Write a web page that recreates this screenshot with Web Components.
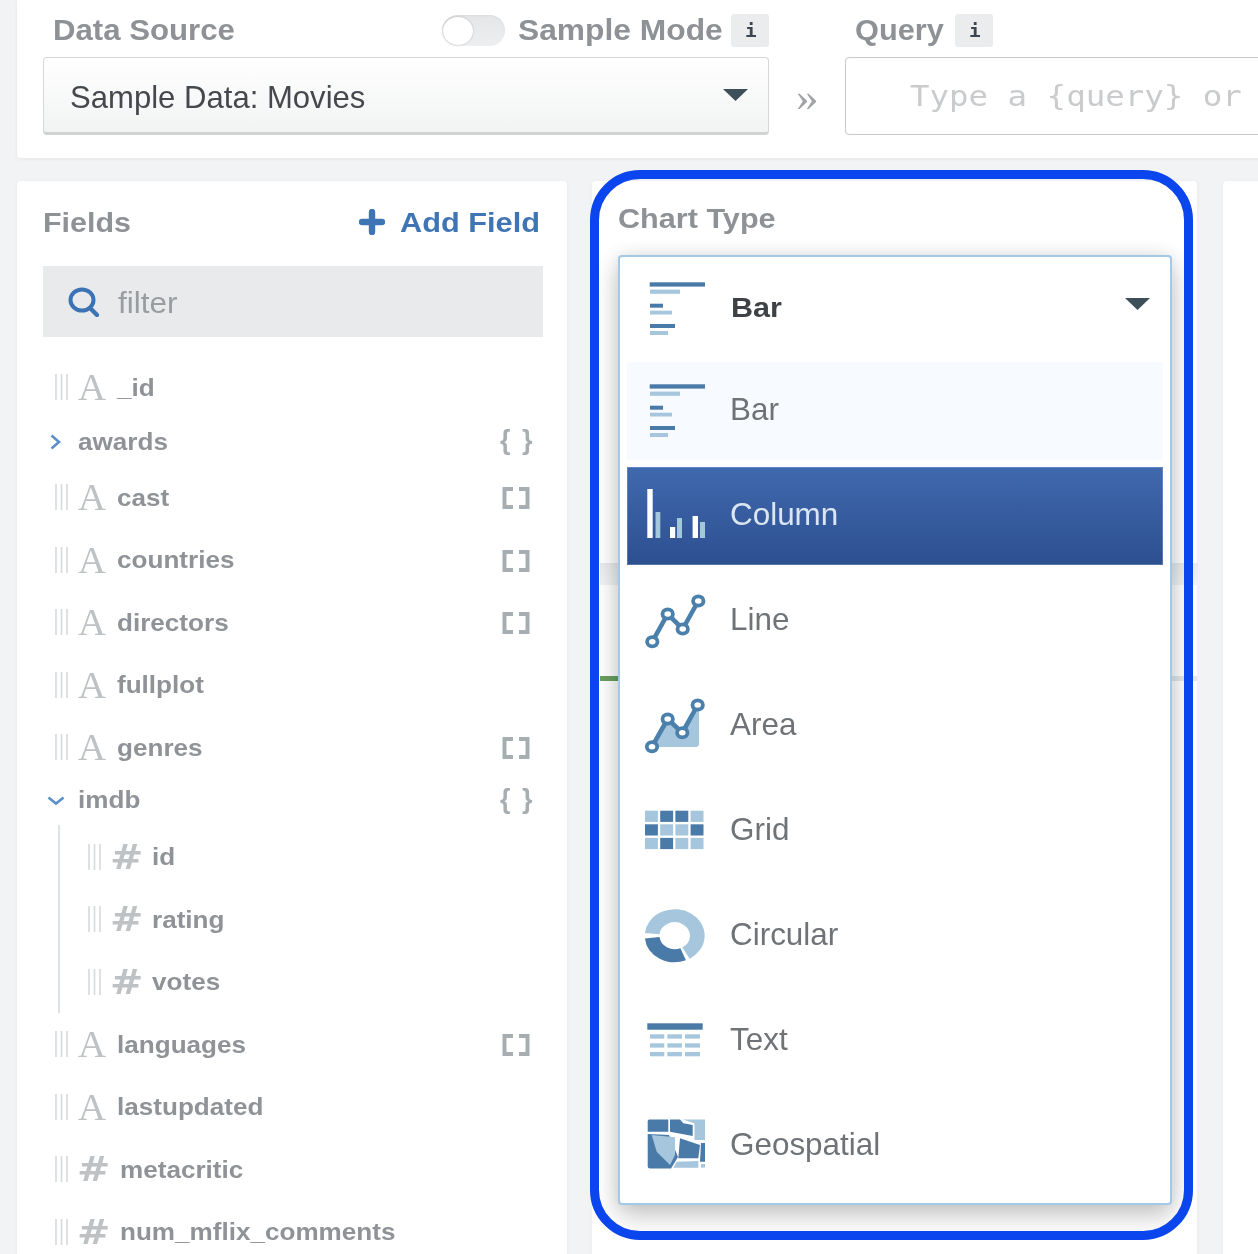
<!DOCTYPE html>
<html lang="en">
<head>
<meta charset="utf-8">
<title>Chart Builder</title>
<style>
html,body{margin:0;padding:0;height:1254px;overflow:hidden;background:#f2f3f5}
</style>
</head>
<body>
<chart-app></chart-app>
<script>
const DARK='#4a7aa8',LIGHT='#a5c6dc';
function def(name,html){
  const cls=class extends HTMLElement{
    constructor(){super();this.attachShadow({mode:'open'});}
    connectedCallback(){this.shadowRoot.innerHTML=typeof html==='function'?html(this):html;}
  };
  customElements.define(name,cls);
}
/* The reference is stretched sideways: text is scaled to match */
def('x-t',`<style>:host{display:inline-block;white-space:nowrap;transform:scaleX(var(--sx,1.13));transform-origin:0 50%}</style><slot></slot>`);

const r=(x,y,w,h,f)=>`<rect x="${x}" y="${y}" width="${w}" height="${h}" fill="${f}"/>`;
const pts=[[7.3,69.7],[22.7,42],[37.7,57],[53.3,29]];
const lineMarks=(p)=>`<polyline points="${p.map(a=>a.join(',')).join(' ')}" fill="none" stroke="#4a80ab" stroke-width="4.6"/>`+
  p.map(a=>`<ellipse cx="${a[0]}" cy="${a[1]}" rx="5.2" ry="4.6" fill="#fff" stroke="#4a80ab" stroke-width="3.8"/>`).join('');
const gridPat=['LDDL','DLLD','LDLL'];
const ICONS={
 bar:r(4.7,22.3,55.3,4.3,DARK)+r(5,29.6,30,4.2,LIGHT)+r(5,43.7,13,4,DARK)+r(5,50.7,22,3.8,LIGHT)+r(5,64,25,4,DARK)+r(5,71,18,4,LIGHT),
 column:r(2.3,22,5.4,49,'#fff')+r(10.5,45,4.8,26,'#a3c8dc')+r(25,60,5.2,11,'#fff')+r(32,51,5,20,'#a3c8dc')+r(47.6,49,5.4,22,'#fff')+r(55,55,5,16,'#a3c8dc'),
 line:lineMarks(pts),
 area:`<polygon points="7,70 22.7,42 37.3,55.7 52.7,28 54,28 54,68 52,70" fill="${LIGHT}"/>`+lineMarks([[7,69.7],[22.7,42],[37.3,55.7],[52.7,28]]),
 grid:gridPat.map((row,j)=>[...row].map((c,i)=>r(i*15.2,28.7+j*13.6,12.9,11.2,c==='D'?DARK:LIGHT)).join('')).join(''),
 circular:`<g transform="translate(29.7,48.7) scale(1.13,1)" fill="none" stroke-width="13">
   <path d="M-19.89 -2.09A20 20 0 1 1 10 17.32" stroke="${LIGHT}"/>
   <path d="M7.49 18.54A20 20 0 0 1 -19.89 2.09" stroke="${DARK}"/></g>`,
 text:r(2.3,31.3,55.4,6.4,DARK)+[42.3,51.3,60].map(y=>r(5,y,14.3,4.3,LIGHT)+r(22.3,y,14.7,4.3,LIGHT)+r(40,y,15,4.3,LIGHT)).join(''),
 geo:`<path d="M2.7 24a1.5 1.5 0 0 1 1.5-1.5H23.3V34.7L2.7 34.7Z" fill="${DARK}"/>
   <polygon points="25,22.5 35,22.5 38.3,26.3 47.7,28 47.7,39 25,34.7" fill="${DARK}"/>
   <polygon points="38,22.5 60,22.5 60,43 49.5,43 49.5,26.5" fill="${LIGHT}"/>
   <path d="M2.7 37L24 38 33 60 26 71.5H5a2.3 2.3 0 0 1-2.3-2.3Z" fill="${DARK}"/>
   <polygon points="6.7,38 30,40.3 30,58 25,68 11.7,54.7" fill="${LIGHT}"/>
   <polygon points="35,41.3 55,48 53.3,61.3 33.3,61.3" fill="${DARK}"/>
   <polygon points="31.7,64.7 53.3,64 53.3,70.8 28.3,70.8" fill="${LIGHT}"/>
   <polygon points="56,46 60,46 60,64.7 55,64.7" fill="${DARK}"/>
   <rect x="56" y="67" width="4" height="3.6" fill="${LIGHT}"/>`
};
def('chart-icon',h=>`<style>:host{display:block;width:62px;height:98px;flex:none}svg{display:block;overflow:visible}</style>
 <svg width="62" height="98" viewBox="0 0 62 98" aria-hidden="true">${ICONS[h.getAttribute('type')]}</svg>`);

def('chart-option',h=>{
 const sel=h.hasAttribute('selected'),cur=h.hasAttribute('current');
 return `<style>
 :host{display:flex;align-items:center;height:98px;padding-left:18px;gap:23px;margin-bottom:7px;
  font:400 30.5px "Liberation Sans",sans-serif;color:#6f7377;--sx:1.03;
  background:${sel?'linear-gradient(#4069ae,#2d4f90)':cur?'#f7faff':'transparent'};
  ${sel?'color:#dbe6f3;box-shadow:inset 0 0 0 1px rgba(160,185,225,.35);':''}}
 x-t{margin-bottom:2px}
 </style><chart-icon type="${h.getAttribute('icon')}"></chart-icon><x-t>${h.getAttribute('label')}</x-t>`;
});

def('chart-dropdown',`<style>
 :host{display:block;background:#fff;border:2px solid #a3c9e9;border-radius:4px;height:950px;box-sizing:border-box;
  box-shadow:0 12px 26px rgba(0,0,0,.2),0 0 18px rgba(0,0,0,.1);flex:none}
 .head{display:flex;align-items:center;height:105px;padding:0 20px 0 25px;font:700 27px "Liberation Sans",sans-serif;color:#3e4246}
 .head x-t{margin:0 0 2px 24px}
 .head svg{margin-left:auto;margin-bottom:10px}
 .list{padding:0 7px}
 </style>
 <div class="head"><chart-icon type="bar"></chart-icon><x-t>Bar</x-t>
  <svg width="25" height="12" viewBox="0 0 25 12"><path d="M0 0H25L12.5 12Z" fill="#3d4f58"/></svg></div>
 <div class="list">
  <chart-option icon="bar" label="Bar" current></chart-option>
  <chart-option icon="column" label="Column" selected></chart-option>
  <chart-option icon="line" label="Line"></chart-option>
  <chart-option icon="area" label="Area"></chart-option>
  <chart-option icon="grid" label="Grid"></chart-option>
  <chart-option icon="circular" label="Circular"></chart-option>
  <chart-option icon="text" label="Text"></chart-option>
  <chart-option icon="geo" label="Geospatial"></chart-option>
 </div>`);

def('chart-panel',`<style>
 :host{display:block;position:relative;flex:none;width:605px;height:1200px;margin-left:25px;background:#fff;border-radius:4px;box-shadow:0 0 4px rgba(0,0,0,.04);box-sizing:border-box;padding-top:382px}
 .band{height:22px;margin-left:8px;margin-right:-1px;background:linear-gradient(#e9eaec,#f2f3f4)}
 .rule{display:flex;height:5px;margin:91px 0 0 8px}
 .rule i{display:block;height:5px}
 .ring{position:absolute;left:-2px;top:-11px;width:602.5px;height:1070px;box-sizing:border-box;border:9.5px solid #0a45ee;border-radius:50px;overflow:hidden;display:flex;flex-direction:column;padding:0 11.5px 0 18.5px}
 .title{height:75.5px;padding-top:13px;box-sizing:border-box;font:700 28.5px/52px "Liberation Sans",sans-serif;color:#8e9195;flex:none;--sx:1.074}
 .title x-t{display:block;line-height:53px}
 </style>
 <div class="band"></div>
 <div class="rule"><i style="width:100px;background:#6a9f5f"></i><i style="flex:1;background:#e6e7e8"></i></div>
 <div class="ring">
  <div class="title"><x-t>Chart Type</x-t></div>
  <chart-dropdown></chart-dropdown>
 </div>`);

const grip=`<svg class="grip" width="13" height="26" viewBox="0 0 13 26"><path d="M1 0V26M6.5 0V26M12 0V26" stroke="#d6d9db" stroke-width="1.6"/></svg>`;
const SUFFIX={
 array:`<svg class="suf" style="margin-right:37px;margin-top:2px" width="28" height="22" viewBox="0 0 28 22"><path d="M11 2H2.5V20H11M17 2H25.5V20H17" fill="none" stroke="#a7aeb1" stroke-width="4"/></svg>`,
 object:`<x-t class="br">{ }</x-t>`
};
const rowCss=`
 :host{display:flex;align-items:center;font:700 24px "Liberation Sans",sans-serif;color:#8f9296;box-sizing:border-box;position:relative;--sx:1.087}
 .grip{flex:none}
 .k{flex:none;color:#bfc2c4}
 .k.A{font:400 38px/1 "Liberation Serif",serif;width:38px;--sx:1.02;margin-left:10px;margin-right:1px}
 .k.N{font:700 34px/1 "DejaVu Sans",sans-serif;width:43px;--sx:1.17;margin-left:9px}
 .suf{margin-left:auto;flex:none}
 .br{margin-left:auto;width:67px;flex:none;font:700 27px "Liberation Sans",sans-serif;letter-spacing:2px;color:#a7aeb1;--sx:1;margin-bottom:3px}
 x-t.n{margin-top:1px}
`;
def('field-row',h=>{
 const nested=h.hasAttribute('nested');
 const kind=h.getAttribute('kind')||'A';
 const s=h.getAttribute('suffix');
 return `<style>${rowCss}:host{height:62.5px;padding-left:${nested?71:38}px}${nested?'.k.N{width:42px}':''}</style>
 ${grip}<x-t class="k ${kind==='#'?'N':'A'}">${kind}</x-t><x-t class="n">${h.getAttribute('name')}</x-t>${s?SUFFIX[s]:''}`;
});
def('field-parent',h=>{
 const open=h.hasAttribute('open');
 const s=open?`<svg width="18" height="10" viewBox="0 0 18 10" style="margin-left:0"><path d="M1.5 1.5L9 7.5L16.5 1.5" fill="none" stroke="#5a8fc8" stroke-width="2.6"/></svg>`
  :`<svg width="11" height="16" viewBox="0 0 11 16" style="margin-left:3px"><path d="M1.5 1.5L9 8L1.5 14.5" fill="none" stroke="#5a8fc8" stroke-width="2.6"/></svg>`;
 return `<style>${rowCss}:host{height:${h.getAttribute('h')||45}px;padding-left:30px}.c{width:31px;flex:none;display:flex;align-items:center}x-t.n{margin-top:0;margin-bottom:1px}</style>
 <span class="c">${s}</span><x-t class="n">${h.getAttribute('name')}</x-t>${SUFFIX.object}`;
});
def('nested-fields',`<style>:host{display:block;margin-top:2px;position:relative}
 .l{position:absolute;left:41px;top:0;bottom:0;width:2px;background:#dfe2e4}</style><div class="l"></div><slot></slot>`);

def('fields-panel',`<style>
 :host{display:block;flex:none;width:550px;height:1200px;background:#fff;border-radius:4px;box-shadow:0 0 4px rgba(0,0,0,.04);box-sizing:border-box;overflow:hidden}
 .head{display:flex;align-items:center;height:82px;margin-bottom:3px;padding:0 0 0 26px}
 .title{font:700 28.5px "Liberation Sans",sans-serif;color:#8e9195;--sx:1.067}
 .add{margin-left:auto;width:208px;display:flex;align-items:center;gap:15px;font:700 28.5px "Liberation Sans",sans-serif;color:#3f74b5;--sx:1.078}
 .add x-t{margin-top:1px}
 .search{display:flex;align-items:center;height:71px;margin:0 24px 18.75px 26px;background:#e9eaec;padding-left:25px;gap:19px;font:400 30px "Liberation Sans",sans-serif;color:#9a9da0;--sx:1.05}
 .search x-t{margin-top:3px}
 </style>
 <div class="head"><x-t class="title">Fields</x-t>
  <div class="add"><svg width="26" height="26" viewBox="0 0 26 26"><path d="M13 3V23M3 13H23" stroke="#3f74b5" stroke-width="6.4" stroke-linecap="round" fill="none" /></svg><x-t>Add Field</x-t></div></div>
 <div class="search"><svg width="31" height="30" viewBox="0 0 31 30"><ellipse cx="14" cy="13" rx="11.5" ry="10.5" fill="none" stroke="#3d72b5" stroke-width="4"/><path d="M22 21L29 28" stroke="#3d72b5" stroke-width="4.4" stroke-linecap="round"/></svg><x-t>filter</x-t></div>
 <field-row name="_id"></field-row>
 <field-parent name="awards" h="47.5"></field-parent>
 <field-row name="cast" suffix="array"></field-row>
 <field-row name="countries" suffix="array"></field-row>
 <field-row name="directors" suffix="array"></field-row>
 <field-row name="fullplot"></field-row>
 <field-row name="genres" suffix="array"></field-row>
 <field-parent name="imdb" open></field-parent>
 <nested-fields>
  <field-row nested kind="#" name="id"></field-row>
  <field-row nested kind="#" name="rating"></field-row>
  <field-row nested kind="#" name="votes"></field-row>
 </nested-fields>
 <field-row name="languages" suffix="array"></field-row>
 <field-row name="lastupdated"></field-row>
 <field-row kind="#" name="metacritic"></field-row>
 <field-row kind="#" name="num_mflix_comments"></field-row>`);

def('info-badge',`<style>:host{display:flex;align-items:center;justify-content:center;width:38px;height:33px;background:#ebeced;border-radius:3px;font:700 18px "DejaVu Sans Mono",monospace;color:#3d4650;flex:none}</style><x-t>i</x-t>`);
def('toggle-switch',`<style>:host{display:block;position:relative;flex:none;width:63px;height:31px;border-radius:16px;background:linear-gradient(#e4e6e8,#eceef0);box-shadow:inset 0 1px 2px rgba(0,0,0,.05)}
 i{position:absolute;left:1px;top:2px;width:30px;height:28px;border-radius:50%;background:#fff;box-shadow:0 0 2px rgba(0,0,0,.25)}</style><i></i>`);

def('top-bar',`<style>
 :host{display:flex;height:158px;width:1300px;margin-left:17px;background:#fff;border-radius:0 0 4px 4px;box-shadow:0 1px 4px rgba(0,0,0,.06);box-sizing:border-box;padding-left:26px;font:700 29px "Liberation Sans",sans-serif;color:#8e9195;--sx:1.075}
 .src{width:726px;flex:none}
 .labels{display:flex;align-items:center;height:57px;padding-top:4px;box-sizing:border-box}
 .labels .first{margin-left:10px}
 .right{margin-left:auto;display:flex;align-items:center;gap:13px}
 .tx{display:block;flex:none}
 .select{display:flex;align-items:center;height:78px;box-sizing:border-box;border:1.5px solid #d6d7d8;border-bottom:3px solid #d0d2d3;border-radius:4px;background:linear-gradient(#fff,#f2f3f3);padding:0 20px 0 26px;font:400 30.5px "Liberation Sans",sans-serif;color:#45494d;--sx:1.019}
 .select x-t{margin-top:4px}
 .select svg{margin-left:auto}
 .go{width:76px;flex:none;height:78px;margin-top:57px;display:flex;align-items:center;padding-left:27px;box-sizing:border-box;font:400 40px "Liberation Serif",serif;color:#a0a4a7;--sx:1.13}
 .qry{flex:none;width:500px}
 .input{height:78px;box-sizing:border-box;border:1.8px solid #c6c8ca;border-radius:4px;display:flex;align-items:center;padding-left:64px;font:400 28.7px "DejaVu Sans Mono",monospace;color:#c9cbcd;background:#fff;--sx:1.13}
 </style>
 <div class="src">
  <div class="labels"><x-t class="first">Data Source</x-t>
   <div class="right"><toggle-switch></toggle-switch><span class="tx" style="width:200px;--sx:1.095"><x-t>Sample Mode</x-t></span><info-badge></info-badge></div></div>
  <div class="select"><x-t>Sample Data: Movies</x-t><svg width="25" height="12" viewBox="0 0 25 12"><path d="M0 0H25L12.5 12Z" fill="#3d4f58"/></svg></div>
 </div>
 <div class="go"><x-t>»</x-t></div>
 <div class="qry">
  <div class="labels" style="padding-left:10px;gap:11px"><span class="tx" style="width:89px;--sx:1.06"><x-t>Query</x-t></span><info-badge></info-badge></div>
  <div class="input"><x-t>Type a {query} or</x-t></div>
 </div>`);

def('chart-app',`<style>
 :host{display:block;width:1258px;height:1254px;overflow:hidden;background:#f2f3f5;filter:blur(.7px)}
 .main{display:flex;margin:23px 0 0 17px;width:1400px}
 .third{display:block;flex:none;width:200px;height:1200px;margin-left:26px;background:#fff;border-radius:4px;box-shadow:0 0 4px rgba(0,0,0,.04)}
 </style>
 <top-bar></top-bar>
 <div class="main"><fields-panel></fields-panel><chart-panel></chart-panel><div class="third"></div></div>`);
</script>
</body>
</html>
